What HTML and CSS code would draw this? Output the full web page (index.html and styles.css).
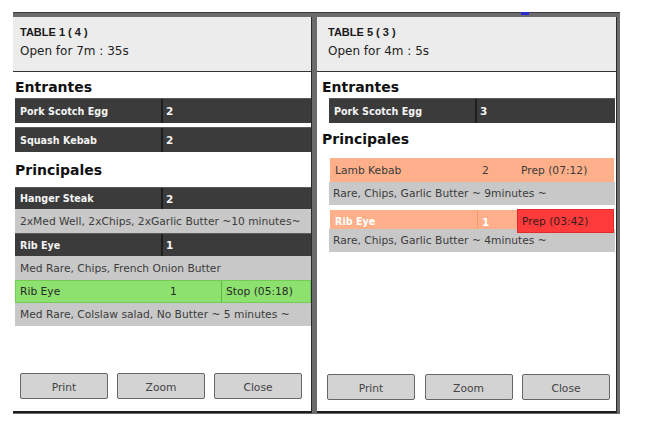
FILE: index.html
```html
<!DOCTYPE html>
<html lang="en">
<head>
<meta charset="utf-8">
<title>Kitchen tickets</title>
<link rel="stylesheet" href="styles.css">
</head>
<body>
<div class="frame">
  <span class="marker"></span>

  <section class="panel panel-left">
    <header class="ticket-head">
      <div class="ticket-title">TABLE 1 ( 4 )</div>
      <div class="ticket-open">Open for 7m : 35s</div>
    </header>
    <div class="ticket-body">
      <h2 class="course">Entrantes</h2>
      <div class="item item-dark item-tall"><span class="c-name">Pork Scotch Egg</span><span class="c-qty">2</span></div>
      <div class="item item-dark item-tall item-gap"><span class="c-name">Squash Kebab</span><span class="c-qty">2</span></div>

      <h2 class="course course-second">Principales</h2>
      <div class="item item-dark h22"><span class="c-name">Hanger Steak</span><span class="c-qty">2</span></div>
      <div class="note h24">2xMed Well, 2xChips, 2xGarlic Butter ~10 minutes~</div>
      <div class="item item-dark h23"><span class="c-name">Rib Eye</span><span class="c-qty">1</span></div>
      <div class="note h24">Med Rare, Chips, French Onion Butter</div>
      <div class="item item-green h23"><span class="c-name">Rib Eye</span><span class="c-qty c-qty-wide">1</span><span class="c-state state-green">Stop (05:18)</span></div>
      <div class="note h23">Med Rare, Colslaw salad, No Butter ~ 5 minutes ~</div>
    </div>
    <div class="actions">
      <button class="btn">Print</button>
      <button class="btn">Zoom</button>
      <button class="btn">Close</button>
    </div>
  </section>

  <section class="panel panel-right">
    <header class="ticket-head">
      <div class="ticket-title">TABLE 5 ( 3 )</div>
      <div class="ticket-open">Open for 4m : 5s</div>
    </header>
    <div class="ticket-body">
      <h2 class="course">Entrantes</h2>
      <div class="item item-dark item-tall"><span class="c-name">Pork Scotch Egg</span><span class="c-qty">3</span></div>

      <h2 class="course course-second">Principales</h2>
      <div class="item item-salmon h24"><span class="c-name">Lamb Kebab</span><span class="c-qty c-qty-narrow">2</span><span class="c-state">Prep (07:12)</span></div>
      <div class="note h23">Rare, Chips, Garlic Butter ~ 9minutes ~</div>
      <div class="item item-salmon item-late h19"><span class="c-name">Rib Eye</span><span class="c-qty c-qty-narrow">1</span><span class="c-state state-red">Prep (03:42)</span></div>
      <div class="note h23">Rare, Chips, Garlic Butter ~ 4minutes ~</div>
    </div>
    <div class="actions">
      <button class="btn">Print</button>
      <button class="btn">Zoom</button>
      <button class="btn">Close</button>
    </div>
  </section>
</div>
</body>
</html>
```

FILE: styles.css
```css
html, body {
  margin: 0;
  padding: 0;
  background: #ffffff;
}

body {
  font-family: "DejaVu Sans", "Noto Sans", sans-serif;
  color: #333333;
}

.frame {
  position: relative;
  display: flex;
  gap: 5px;
  margin: 12px 0 0 13px;
  width: 607px;
  height: 402px;
  box-sizing: border-box;
  background: #6b6b6b;
  border-top: 1px solid #3c3c3c;
  padding: 4px 3px 1px 0;
}

.marker {
  position: absolute;
  top: -1px;
  left: 508px;
  width: 8px;
  height: 3px;
  background: #2b2bd2;
}

.panel {
  display: flex;
  flex-direction: column;
  background: #ffffff;
  border-right: 1px solid #2a2a2a;
  border-bottom: 2px solid #1c1c1c;
}

.panel-left { width: 298px; }
.panel-right { width: 299px; }

.ticket-head {
  height: 55px;
  box-sizing: border-box;
  padding: 9px 0 0 7px;
  background: #ececec;
  border-bottom: 1px solid #333333;
}

.panel-right .ticket-head { padding-left: 11px; }

.ticket-title {
  font-family: "Liberation Sans", Arial, sans-serif;
  font-weight: bold;
  font-size: 11px;
  line-height: 13px;
  color: #1a1a1a;
}

.ticket-open {
  margin-top: 5px;
  font-size: 12px;
  line-height: 14px;
  color: #222222;
}

.ticket-body {
  display: flex;
  flex-direction: column;
  padding-left: 2px;
}

.panel-right .ticket-body {
  padding-left: 12px;
  padding-right: 1px;
}

.course {
  margin: 5px 0 1px 0;
  font-size: 14px;
  line-height: 20px;
  font-weight: bold;
  color: #111111;
}

.panel-right .course { margin-left: -7px; }

.course-second { margin-top: 8px; margin-bottom: 7px; }
.panel-right .course-second { margin-top: 6px; margin-bottom: 9px; }

.item {
  display: flex;
  align-items: stretch;
  box-sizing: border-box;
}

.item-tall { height: 25px; }
.item-gap { margin-top: 4px; }
.h19 { height: 19px; }
.h22 { height: 22px; }
.h23 { height: 23px; }
.h24 { height: 24px; }

.c-name {
  display: flex;
  align-items: center;
  width: 148px;
  flex: none;
  box-sizing: border-box;
  padding-left: 5px;
}

.c-qty {
  display: flex;
  align-items: center;
  flex: 1;
  padding-left: 4px;
}

.c-qty-wide { flex: none; width: 58px; box-sizing: border-box; padding-left: 7px; }
.c-qty-narrow { flex: none; width: 39px; box-sizing: border-box; padding-left: 4px; }

.c-state {
  display: flex;
  align-items: center;
  flex: 1;
  padding-left: 4px;
}

.item-dark {
  background: #3b3b3b;
  border-top: 1px solid #5a5a5a;
  color: #f4f4f4;
  font-weight: bold;
  font-size: 9.6px;
}

.item-dark .c-name { border-right: 2px solid #1e1e1e; }
.item-dark .c-qty { font-size: 10.5px; padding-left: 3px; }

.note {
  display: flex;
  align-items: center;
  box-sizing: border-box;
  padding-left: 5px;
  background: #c8c8c8;
  color: #3c3c3c;
  font-size: 10.7px;
  white-space: nowrap;
}

.panel-right .note { padding-left: 4px; }

.item-green {
  background: #8de16e;
  border: 1px solid #72cc55;
  color: #2a2a2a;
  font-size: 10.7px;
}

.item-green .c-name { padding-left: 4px; width: 147px; }

.state-green {
  border-left: 1px solid #5fb844;
  padding-left: 4px;
}

.item-salmon {
  background: #ffb08a;
  color: #3a3a3a;
  font-size: 10.7px;
  margin-right: 1px;
  margin-left: 1px;
}

.item-late {
  margin-top: 5px;
  color: #ffffff;
  font-weight: bold;
  font-size: 9.6px;
}

.item-late .c-name,
.item-late .c-qty { padding-top: 4px; }
.item-late .c-name { border-right: 1px solid #f49a70; }
.item-late .c-qty { font-size: 10.5px; }

.state-red {
  position: relative;
  z-index: 1;
  margin-top: -1px;
  margin-bottom: -4px;
  background: #ff3a3a;
  border: 1px solid #e52a2a;
  color: #3a1a1a;
  font-weight: normal;
  font-size: 10.7px;
  padding-left: 4px;
}

.actions {
  display: flex;
  justify-content: space-between;
  margin-top: auto;
  padding: 0 9px 12px 7px;
}

.panel-right .actions {
  padding: 0 6px 11px 10px;
}

.btn {
  width: 88px;
  height: 26px;
  box-sizing: border-box;
  margin: 0;
  padding: 2px 0 0 0;
  background: #d3d3d3;
  border: 1px solid #666666;
  border-radius: 2px;
  font-family: "DejaVu Sans", "Noto Sans", sans-serif;
  font-size: 10.7px;
  color: #444444;
  text-align: center;
}
```
